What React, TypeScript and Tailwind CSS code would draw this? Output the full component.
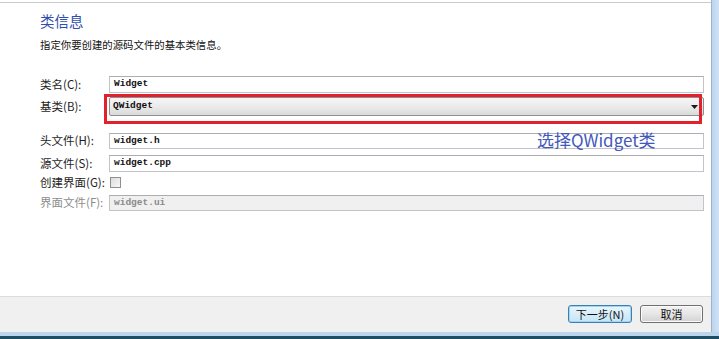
import React from "react";

const cjk = { fontFamily: '"Noto Sans CJK SC", "Noto Sans", sans-serif' };
const mono = { fontFamily: '"Liberation Mono", "DejaVu Sans Mono", monospace' };

function Label({ text, disabled = false }: { text: string; disabled?: boolean }) {
    return (
        <div
            className={`w-[69px] pl-[40px] box-content shrink-0 text-[11.5px] leading-none whitespace-nowrap ${
                disabled ? "text-[#8d8d8d]" : "text-[#1e1e1e]"
            }`}
        >
            {text}
        </div>
    );
}

function TextField({ value, disabled = false }: { value: string; disabled?: boolean }) {
    return (
        <div
            className={`w-[595px] h-full flex items-center pl-[4px] border border-[#c2c4c9] border-t-[#abadb3] text-[9.5px] font-semibold ${
                disabled ? "bg-[#f0f0f0] text-[#8a8a8a]" : "bg-white text-[#111]"
            }`}
            style={mono}
        >
            {value}
        </div>
    );
}

export default function App() {
    return (
        <div className="w-[719px] h-[339px] flex flex-col bg-white overflow-hidden" style={cjk}>
            <div className="flex flex-1 min-h-0">
                <div className="flex-1 flex flex-col">
                    <div className="h-[2px]" />
                    <div className="h-[1px] bg-[#c9cacc]" />

                    <main className="flex-1 relative flex flex-col">
                        <div className="mt-[9px] pl-[40px] h-[18px] leading-[18px] text-[14.5px] text-[#2f4fae]">
                            类信息
                        </div>
                        <div className="mt-[8px] pl-[40px] h-[14px] leading-[14px] text-[10.4px] text-[#111]">
                            指定你要创建的源码文件的基本类信息。
                        </div>

                        <div className="mt-[24px] h-[17px] flex items-center">
                            <Label text="类名(C):" />
                            <TextField value="Widget" />
                        </div>

                        <div className="mt-[4px] h-[19px] flex items-center">
                            <Label text="基类(B):" />
                            <div className="w-[595px] h-full flex items-center justify-between pl-[3px] pr-[5px] rounded-[2px] border border-[#8e8f8f] bg-gradient-to-b from-[#f6f6f6] via-[#ebebeb] to-[#dadada]">
                                <span className="text-[9.5px] font-semibold text-[#111]" style={mono}>
                                    QWidget
                                </span>
                                <svg width="7" height="4" viewBox="0 0 7 4">
                                    <path d="M0 0h7L3.5 4z" fill="#1a1a1a" />
                                </svg>
                            </div>
                        </div>

                        <div className="mt-[17px] h-[16px] flex items-center">
                            <Label text="头文件(H):" />
                            <TextField value="widget.h" />
                        </div>

                        <div className="mt-[6px] h-[17px] flex items-center">
                            <Label text="源文件(S):" />
                            <TextField value="widget.cpp" />
                        </div>

                        <div className="mt-[5px] h-[11px] flex items-center">
                            <Label text="创建界面(G):" />
                            <div className="ml-[1px] w-[11px] h-[11px] border border-[#8f8f8f] bg-gradient-to-br from-[#dcdcdc] to-[#f8f8f8]" />
                        </div>

                        <div className="mt-[7px] h-[16px] flex items-center">
                            <Label text="界面文件(F):" disabled />
                            <TextField value="widget.ui" disabled />
                        </div>

                        {/* annotation overlay */}
                        <div className="absolute left-[104px] top-[91px] w-[598px] h-[30px] border-[3px] border-[#e2212a]" />
                        <div className="absolute left-[537px] top-[127px] text-[17px] leading-[20px] text-[#4358bb]">
                            选择QWidget类
                        </div>
                    </main>

                    <footer className="h-[36px] shrink-0 bg-[#f0f0f0] border-t border-[#dcdcdc] flex justify-end items-start pt-[8px] pr-[8px] gap-[8px]">
                        <button className="w-[64px] h-[18px] rounded-[3px] border border-[#3c7fb1] bg-gradient-to-b from-[#eaf6fd] to-[#c4e5f6] text-[11px] leading-none text-[#111] shadow-[inset_0_0_0_1px_#9fd5f2]">
                            下一步(N)
                        </button>
                        <button className="w-[63px] h-[18px] rounded-[3px] border border-[#707070] bg-gradient-to-b from-[#f2f2f2] via-[#e6e6e6] to-[#d2d2d2] text-[11px] leading-none text-[#111] shadow-[inset_0_0_0_1px_#fbfbfb]">
                            取消
                        </button>
                    </footer>
                </div>
                <div className="w-[8px] shrink-0 border-l border-[#9fb3c6] bg-gradient-to-r from-[#bcd6ee] to-[#cfe2f3]" />
            </div>
            <div className="h-[7px] shrink-0 flex flex-col">
                <div className="h-[4px] bg-[#bdd5ec]" />
                <div className="h-[3px] bg-[#1f4d63]" />
            </div>
        </div>
    );
}
